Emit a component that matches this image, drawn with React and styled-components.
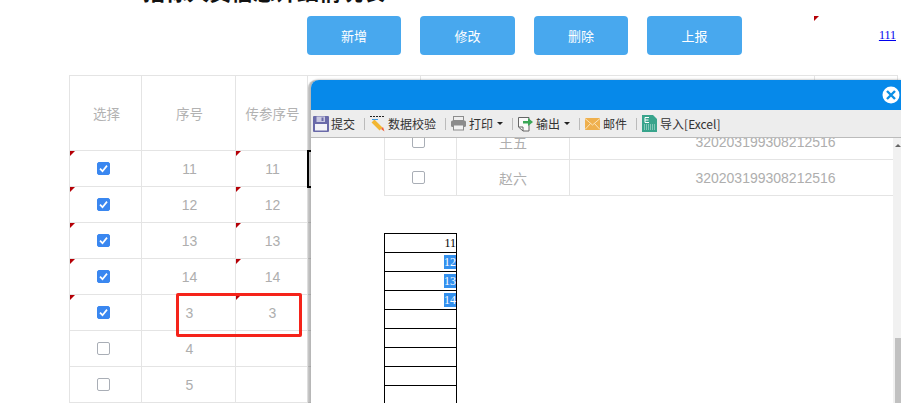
import React from 'react'
import styled, { createGlobalStyle } from 'styled-components'

const GlobalStyle = createGlobalStyle`
  html, body {
    margin: 0;
    padding: 0;
    background: #fff;
  }
  body {
    font-family: "Liberation Sans", "Noto Sans CJK SC", sans-serif;
  }
`

const Page = styled.div`
  position: relative;
  width: 901px;
  height: 403px;
  overflow: hidden;
  background: #fff;
`

const TitleBar = styled.div`
  height: 16px;
  padding-left: 143px;
  overflow: hidden;
`

const Title = styled.h1`
  margin: -21px 0 0;
  font: bold 22px/22px "Noto Sans CJK SC", sans-serif;
  color: #111;
  white-space: nowrap;
`

const ActionBar = styled.div`
  display: flex;
  height: 59px;
  padding-left: 307px;
`

const ActionButton = styled.button`
  width: ${({ $w }) => $w}px;
  height: 39px;
  margin-right: 19px;
  padding: 0;
  border: 0;
  border-radius: 4px;
  background: #48a8ee;
  color: #fff;
  font: 13px "Noto Sans CJK SC", sans-serif;
`

const LinkCell = styled.div`
  position: relative;
  width: 82px;
  height: 39px;
  margin-left: 53px;
  text-align: right;
`

const ReportLink = styled.a`
  display: inline-block;
  margin-top: 12px;
  font: 12px/14px "Liberation Serif", serif;
  color: #0000ee;
  text-decoration: underline;
`

const CornerMark = styled.i`
  position: absolute;
  top: 0;
  left: 0;
  width: 0;
  height: 0;
  border-top: 5px solid #b50006;
  border-right: 5px solid transparent;
`

const TableWrap = styled.div`
  position: relative;
  margin-left: 69px;
  width: 829px;
`

const GridTable = styled.table`
  border-collapse: collapse;
  table-layout: fixed;
  width: ${({ $w }) => $w}px;
`

const MainTable = styled(GridTable)`
  th, td:not(:first-child) {
    text-indent: 2px;
  }
`

const HeadCell = styled.th`
  width: ${({ $w }) => $w - 1}px;
  height: 74px;
  padding: 0;
  border: 1px solid #e4e4e4;
  font: 13.5px "Noto Sans CJK SC", sans-serif;
  color: #b2b2b2;
`

const Cell = styled.td`
  position: relative;
  width: ${({ $w }) => ($w ? `${$w - 1}px` : 'auto')};
  height: 35px;
  padding: 0;
  border: 1px solid #e4e4e4;
  text-align: center;
  font: 14px "Liberation Sans", "Noto Sans CJK SC", sans-serif;
  color: #aeaeae;
  outline: ${({ $selected }) => ($selected ? '2px solid #000' : 'none')};
  outline-offset: -1px;
`

const CheckCell = styled(Cell)`
  padding-right: 4px;
  line-height: 0;
`

const Check = styled.span`
  display: inline-flex;
  align-items: center;
  justify-content: center;
  box-sizing: border-box;
  width: 13px;
  height: 13px;
  border-radius: 2px;
  border: 1px solid ${({ $on }) => ($on ? '#3a87f0' : '#a9aeb6')};
  background: ${({ $on }) => ($on ? '#3a87f0' : '#fff')};
`

const Highlight = styled.div`
  position: absolute;
  left: 107px;
  top: 218px;
  width: 126px;
  height: 44px;
  box-sizing: border-box;
  border: 3px solid #f5231a;
  border-radius: 2px;
`

const Modal = styled.section`
  position: absolute;
  left: 311px;
  top: 80px;
  width: 590px;
  height: 323px;
  display: flex;
  flex-direction: column;
  background: #fff;
  border-top-left-radius: 8px;
  box-shadow: -3px 0 1px 0 rgba(0, 0, 0, 0.25), 0 -1px 2px rgba(0, 0, 0, 0.15);
`

const ModalHead = styled.header`
  display: flex;
  align-items: center;
  justify-content: flex-end;
  flex: none;
  height: 30px;
  padding-right: 1px;
  background: #0689ea;
  border-top-left-radius: 8px;
`

const Toolbar = styled.div`
  display: flex;
  align-items: center;
  flex: none;
  box-sizing: border-box;
  height: 28px;
  padding: 0 0 0 2px;
  background: #ededed;
  border-bottom: 1px solid #bbb;
`

const ToolItem = styled.div`
  display: flex;
  align-items: center;
  gap: 3px;
  font: 12px "Noto Sans CJK SC", sans-serif;
  color: #333;
  white-space: nowrap;
`

const Caret = styled.i`
  width: 0;
  height: 0;
  margin-left: 1px;
  border-top: 3px solid #222;
  border-left: 3px solid transparent;
  border-right: 3px solid transparent;
`

const Divider = styled.span`
  width: 1px;
  height: 12px;
  margin: 0 5px 0 9px;
  background: #bbb;
`

const ModalBody = styled.div`
  display: flex;
  flex: 1;
  min-height: 0;
`

const ScrollPane = styled.div`
  flex: 1;
  min-width: 0;
  overflow: hidden;
  padding-left: 73px;
`

const PeopleTable = styled(GridTable)`
  margin-top: -15px;
`

const SheetTable = styled.table`
  margin-top: 37px;
  border-collapse: collapse;
  table-layout: fixed;
  width: 73px;
`

const SheetCell = styled.td`
  height: 18px;
  padding: 0;
  border: 1px solid #000;
  text-align: right;
  font: 12px/12px "Liberation Serif", serif;
  color: ${({ $picked }) => ($picked ? '#fff' : '#000')};

  span {
    background: ${({ $picked }) => ($picked ? '#3390ee' : 'transparent')};
  }
`

const ScrollTrack = styled.div`
  display: flex;
  flex: none;
  box-sizing: border-box;
  width: 8px;
  padding: 200px 0 0 2px;
  background: #f1f1f1;
`

const ScrollThumb = styled.div`
  flex: 1;
  background: #c1c1c1;
`

const ScrollArrow = styled.i`
  position: absolute;
  top: 64px;
  right: 0;
  width: 0;
  height: 0;
  border-bottom: 3px solid #666;
  border-left: 3px solid transparent;
  border-right: 3px solid transparent;
`

const Tick = () => (
  <svg width="9" height="9" viewBox="0 0 9 9">
    <path d="M1 4.6 L3.5 7.2 L8 1.6" fill="none" stroke="#fff" strokeWidth="1.7" />
  </svg>
)

const Box = ({ on }) => <Check $on={on}>{on && <Tick />}</Check>

const CloseIcon = () => (
  <svg width="18" height="18" viewBox="0 0 18 18">
    <circle cx="9" cy="9" r="8.5" fill="#fff" />
    <path d="M5 5 L13 13 M13 5 L5 13" stroke="#0a8fe6" strokeWidth="2.4" />
  </svg>
)

const SaveIcon = () => (
  <svg width="16" height="16" viewBox="0 0 16 16" style={{ marginRight: -1 }}>
    <rect width="16" height="16" rx="1" fill="#6a6aa9" />
    <rect x="2" y="8" width="12" height="6.5" fill="#f4f4f8" />
    <rect x="3.5" y="0.5" width="8.5" height="5.5" fill="#c9c9e2" />
    <rect x="8.5" y="1.5" width="2" height="3.5" fill="#6a6aa9" />
  </svg>
)

const PencilIcon = () => (
  <svg width="15" height="16" viewBox="0 0 15 16">
    <path d="M0 0.5 H15" stroke="#222" strokeDasharray="2 1" />
    <path d="M2 3.5 H8" stroke="#3a9ae8" />
    <path d="M3 5 L11 13" stroke="#f2b632" strokeWidth="4" />
    <path d="M11 13 L14.5 15.5 L13 11 Z" fill="#f0603a" />
  </svg>
)

const PrinterIcon = () => (
  <svg width="15" height="15" viewBox="0 0 15 15">
    <rect x="2.5" y="0.5" width="10" height="4" fill="#eee" stroke="#8c8c8c" />
    <rect x="0" y="4.5" width="15" height="6.5" rx="1.5" fill="#8c8c8c" />
    <rect x="2.5" y="9" width="10" height="5" fill="#f2f2f2" stroke="#8c8c8c" />
  </svg>
)

const ExportIcon = () => (
  <svg width="15" height="16" viewBox="0 0 15 16">
    <path d="M0.5 1.5 H11 V15 H5 L0.5 11 Z" fill="#fafafa" stroke="#666" />
    <path d="M5 15 V11 H0.5" fill="none" stroke="#666" />
    <path d="M5 5 H10 V2 L15 6 L10 10 V7.5 H5 Z" fill="#3aa655" />
  </svg>
)

const MailIcon = () => (
  <svg width="15" height="12" viewBox="0 0 15 12">
    <rect width="15" height="12" fill="#efb04e" />
    <path d="M0 0.5 L7.5 7 L15 0.5 M0 11.5 L5.5 5.5 M15 11.5 L9.5 5.5" fill="none" stroke="#fbe3b8" />
  </svg>
)

const ExcelIcon = () => (
  <svg width="15" height="17" viewBox="0 0 15 17">
    <path d="M0 0 H11 L15 4 V17 H0 Z" fill="#38a48c" />
    <path d="M3 2.5 H7 M3 2.5 V7.5 M3 5 H6.5 M3 7.5 H7" stroke="#fff" fill="none" />
    <path d="M2 10 H13 M2 12 H13 M2 14 H13" stroke="#cdeae3" strokeDasharray="1 1" />
  </svg>
)

const actions = [
  { label: '新增', w: 94 },
  { label: '修改', w: 95 },
  { label: '删除', w: 94 },
  { label: '上报', w: 95 },
]

const columns = [
  { label: '选择', w: 72 },
  { label: '序号', w: 94 },
  { label: '传参序号', w: 72 },
  { label: '', w: 113 },
  { label: '', w: 394 },
  { label: '', w: 83 },
]

const rows = [
  { on: true, seq: 11, param: 11 },
  { on: true, seq: 12, param: 12 },
  { on: true, seq: 13, param: 13 },
  { on: true, seq: 14, param: 14 },
  { on: true, seq: 3, param: 3 },
  { on: false, seq: 4, param: '' },
  { on: false, seq: 5, param: '' },
]

const tools = [
  { label: '提交', icon: <SaveIcon /> },
  { label: '数据校验', icon: <PencilIcon /> },
  { label: '打印', icon: <PrinterIcon />, menu: true },
  { label: '输出', icon: <ExportIcon />, menu: true },
  { label: '邮件', icon: <MailIcon /> },
  { label: '导入[Excel]', icon: <ExcelIcon /> },
]

const people = ['王五', '赵六']
const sheet = [11, 12, 13, 14, '', '', '', '', '', '']

const App = () => (
  <Page>
    <GlobalStyle />
    <TitleBar>
      <Title>招标人员信息详细情况表</Title>
    </TitleBar>
    <ActionBar>
      {actions.map(({ label, w }) => (
        <ActionButton key={label} $w={w}>{label}</ActionButton>
      ))}
      <LinkCell>
        <CornerMark />
        <ReportLink href="#">111</ReportLink>
      </LinkCell>
    </ActionBar>

    <TableWrap>
      <MainTable $w={828}>
        <thead>
          <tr>
            {columns.map(({ label, w }, i) => (
              <HeadCell key={i} $w={w}>{label}</HeadCell>
            ))}
          </tr>
        </thead>
        <tbody>
          {rows.map(({ on, seq, param }, i) => (
            <tr key={seq}>
              <CheckCell>
                {on && <CornerMark />}
                <Box on={on} />
              </CheckCell>
              <Cell>{seq}</Cell>
              <Cell>
                {param !== '' && <CornerMark />}
                {param}
              </Cell>
              <Cell $selected={i === 0} />
              <Cell />
              <Cell />
            </tr>
          ))}
        </tbody>
      </MainTable>
      <Highlight />
    </TableWrap>

    <Modal>
      <ModalHead>
        <CloseIcon />
      </ModalHead>
      <Toolbar>
        {tools.map(({ label, icon, menu }, i) => (
          <React.Fragment key={label}>
            {i > 0 && <Divider />}
            <ToolItem>
              {icon}
              {label}
              {menu && <Caret />}
            </ToolItem>
          </React.Fragment>
        ))}
      </Toolbar>
      <ModalBody>
        <ScrollPane>
          <PeopleTable $w={578}>
            <tbody>
              {people.map((name, i) => (
                <tr key={name}>
                  <CheckCell $w={i === 0 ? 68 : undefined}><Box /></CheckCell>
                  <Cell $w={i === 0 ? 113 : undefined}>{name}</Cell>
                  <Cell $w={i === 0 ? 392 : undefined}>320203199308212516</Cell>
                </tr>
              ))}
            </tbody>
          </PeopleTable>
          <SheetTable>
            <tbody>
              {sheet.map((v, i) => (
                <tr key={i}>
                  <SheetCell $picked={i > 0 && v !== ''}><span>{v}</span></SheetCell>
                </tr>
              ))}
            </tbody>
          </SheetTable>
        </ScrollPane>
        <ScrollTrack>
          <ScrollThumb />
        </ScrollTrack>
      </ModalBody>
      <ScrollArrow />
    </Modal>
  </Page>
)

export default App
